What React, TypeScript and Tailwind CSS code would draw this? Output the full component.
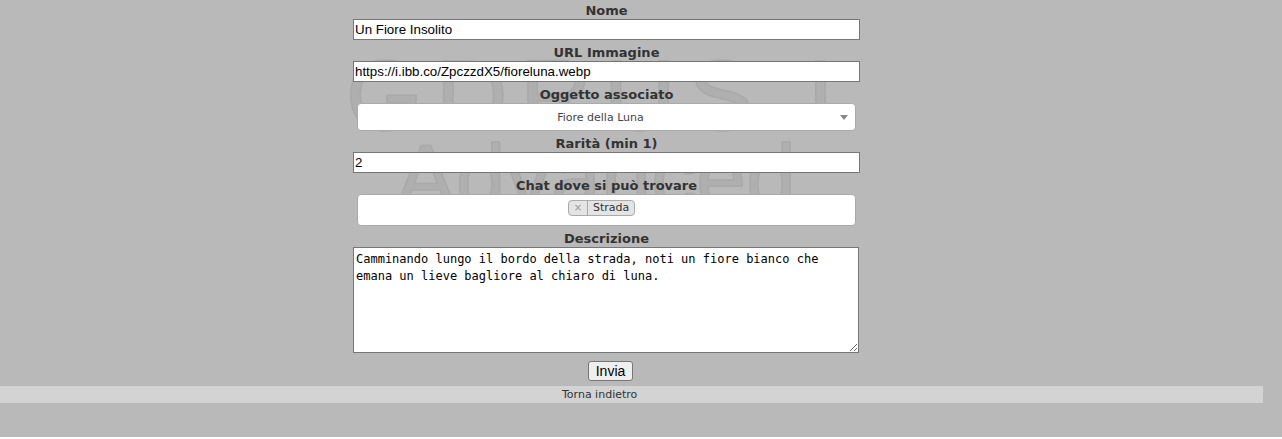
export default function App() {
  return (
    <div className="relative min-h-[439px] w-[1282px] bg-[#b9b9b9] font-['DejaVu_Sans',sans-serif] text-[#333]">
      {/* faded logo behind the form */}
      <svg
        width="480"
        height="180"
        viewBox="0 0 480 180"
        overflow="visible"
        className="pointer-events-none absolute left-[356px] top-[52px]"
      >
        <g fontFamily="Liberation Sans, sans-serif" fill="#afafaf" stroke="#a9a9a9" strokeWidth="1.5" textAnchor="middle">
          <text x="240" y="80" fontSize="100" letterSpacing="12">GDRUS I</text>
          <text x="240" y="158" fontSize="90">Advanced</text>
        </g>
      </svg>

      <div className="relative -mt-[2px] flex flex-col pl-[353px]">
        <form className="flex w-[507px] flex-col">
          <Label text="Nome" />
          <TextInput value="Un Fiore Insolito" />

          <Label text="URL Immagine" />
          <TextInput value="https://i.ibb.co/ZpczzdX5/fioreluna.webp" />

          <Label text="Oggetto associato" />
          <div className="mx-[4px] flex h-[28px] items-center rounded-[4px] border border-[#aaa] bg-white">
            <span className="flex-1 pl-[8px] pt-[2px] text-center text-[11px] text-[#444]">Fiore della Luna</span>
            <svg width="20" height="28" viewBox="0 0 20 28" className="shrink-0">
              <path d="M5 12h8l-4 5z" fill="#888" />
            </svg>
          </div>

          <Label text="Rarità (min 1)" />
          <TextInput value="2" />

          <Label text="Chat dove si può trovare" />
          <div className="mx-[4px] flex h-[32px] justify-center rounded-[4px] border border-[#aaa] bg-white pt-[5px]">
            <span className="mr-[10px] flex h-[16px] items-stretch rounded-[4px] border border-[#aaa] bg-[#e4e4e4] text-[11px] leading-[14px] text-[#333]">
              <span className="border-r border-[#aaa] px-[5px] text-[10px] text-[#999]">×</span>
              <span className="px-[5px]">Strada</span>
            </span>
          </div>

          <Label text="Descrizione" />
          <textarea
            readOnly
            defaultValue="Camminando lungo il bordo della strada, noti un fiore bianco che emana un lieve bagliore al chiaro di luna."
            className="h-[106px] w-[506px] resize-y border border-[#767676] bg-white px-[2px] py-[3px] font-['DejaVu_Sans_Mono',monospace] text-[12px] leading-[17px] text-black outline-none"
          />

          <div className="flex justify-center pl-[8px] pt-[8px]">
            <button
              type="button"
              className="h-[20px] w-[45px] rounded-[3px] border border-[#767676] bg-[#efefef] font-['Liberation_Sans',sans-serif] text-[14px] leading-none text-black"
            >
              Invia
            </button>
          </div>
        </form>
      </div>

      <div className="relative mt-[5px] flex h-[17px] w-[1263px] items-center bg-[#d3d3d3] pl-[562px] pt-[2px] text-[11px] text-[#333]">
        Torna indietro
      </div>
    </div>
  );
}

function Label({ text }: { text: string }) {
  return <div className="h-[21px] pt-[5px] text-center text-[13px] font-bold leading-[16px]">{text}</div>;
}

function TextInput({ value }: { value: string }) {
  return (
    <input
      readOnly
      value={value}
      className="h-[21px] w-[507px] border border-[#767676] bg-white px-[1px] font-['Liberation_Sans',sans-serif] text-[13.33px] text-black outline-none"
    />
  );
}
